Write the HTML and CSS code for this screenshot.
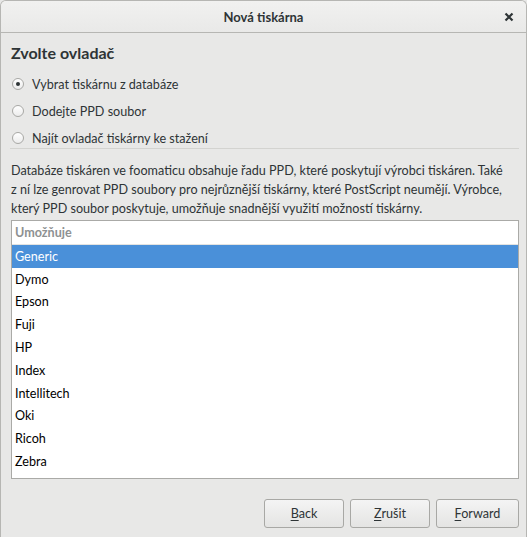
FILE: index.html
```html
<!DOCTYPE html>
<html lang="cs">
<head>
<meta charset="utf-8">
<title>Nová tiskárna</title>
<link rel="stylesheet" href="styles.css">
</head>
<body>
<div class="window">
  <header class="titlebar">
    <span class="title">Nová tiskárna</span>
    <span class="close">
      <svg width="10" height="10" viewBox="0 0 10 10"><path d="M1.5 1.5 L8.5 8.5 M8.5 1.5 L1.5 8.5" stroke="#2e3436" stroke-width="2.2" stroke-linecap="butt"/></svg>
    </span>
  </header>
  <main class="content">
    <h1 class="heading">Zvolte ovladač</h1>
    <div class="radios">
      <label class="radio"><span class="dot checked"></span>Vybrat tiskárnu z databáze</label>
      <label class="radio"><span class="dot"></span>Dodejte PPD soubor</label>
      <label class="radio"><span class="dot"></span>Najít ovladač tiskárny ke stažení</label>
    </div>
    <hr class="sep">
    <p class="desc">Databáze tiskáren ve foomaticu obsahuje řadu PPD, které poskytují výrobci tiskáren. Také<br>z ní lze genrovat PPD soubory pro nejrůznější tiskárny, které PostScript neumějí. Výrobce,<br>který PPD soubor poskytuje, umožňuje snadnější využití možností tiskárny.</p>
    <div class="list">
      <div class="list-header">Umožňuje</div>
      <div class="row selected">Generic</div>
      <div class="row">Dymo</div>
      <div class="row">Epson</div>
      <div class="row">Fuji</div>
      <div class="row">HP</div>
      <div class="row">Index</div>
      <div class="row">Intellitech</div>
      <div class="row">Oki</div>
      <div class="row">Ricoh</div>
      <div class="row">Zebra</div>
    </div>
    <div class="buttons">
      <button class="btn"><u>B</u>ack</button>
      <button class="btn"><u>Z</u>rušit</button>
      <button class="btn"><u>F</u>orward</button>
    </div>
  </main>
</div>
</body>
</html>
```

FILE: styles.css
```css
html, body {
  margin: 0;
  padding: 0;
  background: #e8e8e7;
}
body {
  font-family: Lato, "Noto Sans", sans-serif;
  font-size: 12.6px;
  color: #2e3436;
}
.window {
  width: 527px;
  height: 537px;
  box-sizing: border-box;
  border: 1px solid #b6b6b3;
  border-bottom: none;
  border-radius: 6px 6px 0 0;
  background: #e8e8e7;
  overflow: hidden;
  display: flex;
  flex-direction: column;
}
.titlebar {
  height: 31px;
  flex: none;
  border-bottom: 1px solid #b6b6b3;
  background: linear-gradient(#f1f1f0, #e9e9e8);
  display: flex;
  align-items: center;
  justify-content: center;
  position: relative;
}
.title {
  font-weight: bold;
  font-size: 13px;
  color: #2e3436;
}
.close {
  position: absolute;
  right: 12px;
  top: 11px;
  width: 10px;
  height: 10px;
  display: flex;
}
.content {
  padding: 0 7px 0 9px;
  display: flex;
  flex-direction: column;
}
.heading {
  margin: 10px 0 0 1px;
  font-size: 16px;
  font-weight: bold;
  line-height: 20px;
  color: #2e3436;
}
.radios {
  margin-top: 12px;
  display: flex;
  flex-direction: column;
  gap: 9px;
}
.radio {
  height: 18px;
  display: flex;
  align-items: center;
  gap: 8px;
  padding-left: 2px;
  color: #2e3436;
}
.dot {
  width: 12px;
  height: 12px;
  box-sizing: border-box;
  border-radius: 50%;
  border: 1px solid #a8a8a5;
  background: linear-gradient(#ffffff, #ececec);
  display: flex;
  align-items: center;
  justify-content: center;
}
.dot.checked::after {
  content: "";
  width: 4px;
  height: 4px;
  border-radius: 50%;
  background: #2e3436;
}
.sep {
  margin: 1px 0 0 0;
  border: none;
  border-top: 1px solid #d3d3d0;
  height: 0;
}
.desc {
  margin: 12px 0 0 1px;
  line-height: 19px;
  white-space: nowrap;
  color: #2e3436;
}
.list {
  margin: 2px 0 0 1px;
  height: 259px;
  box-sizing: border-box;
  border: 1px solid #aaaaa7;
  background: #ffffff;
  display: flex;
  flex-direction: column;
}
.list-header {
  height: 23px;
  flex: none;
  display: flex;
  align-items: center;
  padding-left: 3px;
  color: #8e9192;
  font-weight: bold;
  border-bottom: 1px solid #e3e3e1;
}
.row {
  height: 22.8px;
  flex: none;
  display: flex;
  align-items: center;
  padding-left: 3px;
  color: #000000;
}
.row.selected {
  background: #4a90d9;
  color: #ffffff;
}
.buttons {
  margin-top: 20px;
  display: flex;
  justify-content: flex-end;
  gap: 6px;
}
.btn {
  font-family: inherit;
  font-size: 12.6px;
  color: #2e3436;
  height: 29px;
  width: 80px;
  border: 1px solid #a8a8a5;
  border-radius: 3px;
  background: linear-gradient(#f4f4f4, #e4e4e3);
  padding: 0;
}
.btn:last-child {
  width: 83px;
}
.btn u {
  text-decoration-thickness: 1px;
  text-underline-offset: 2px;
}
```
